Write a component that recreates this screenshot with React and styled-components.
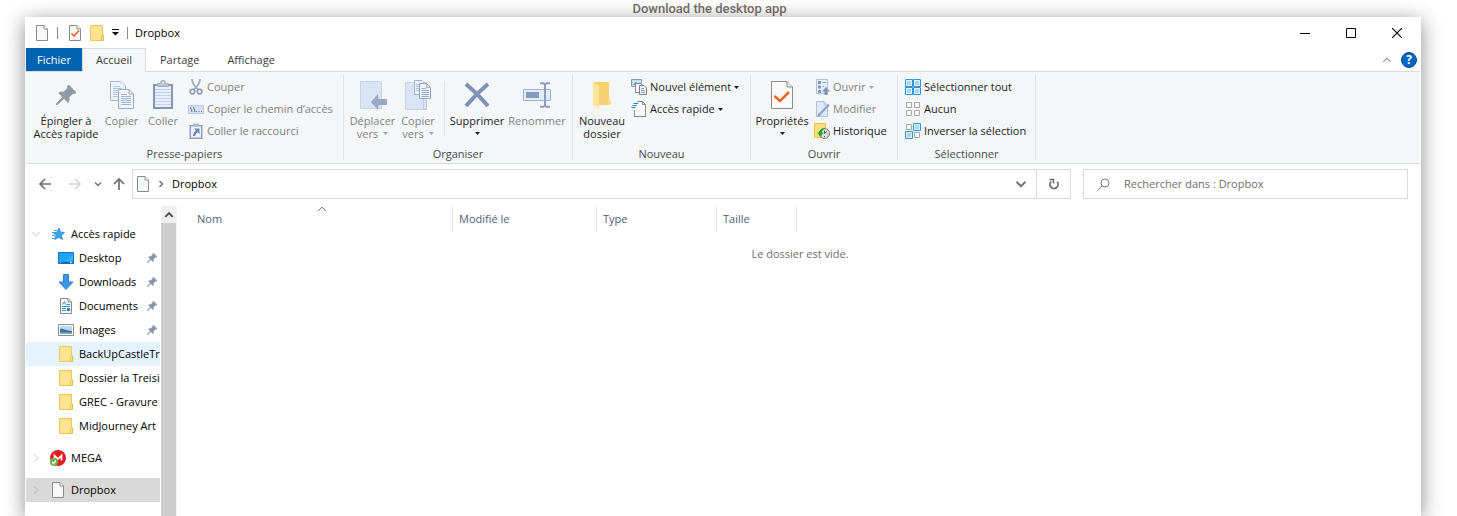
import React from 'react';
import styled, { createGlobalStyle } from 'styled-components';

const GlobalStyle = createGlobalStyle`
    * { box-sizing:border-box; }
    body {
        margin:0; overflow:hidden; background:#fff;
        font-family:"Open Sans", "Noto Sans", sans-serif; font-size:11px; color:#000;
    }
    button, input {
        font-family:inherit; font-size:inherit; color:inherit;
        margin:0; padding:0; border:0; background:none;
    }
    svg { display:block; flex-shrink:0; }
`

/* ---------- icons ---------- */

function Svg({ w = 16, h = 16, children }) {
    return <svg width={w} height={h} viewBox={`0 0 ${w} ${h}`} fill="none" aria-hidden="true">{children}</svg>
}

const FileIcon = () => (
    <Svg w={14}>
        <path d="M1.5 .5H9L12.5 4V15.5H1.5Z" fill="#f7f8f9" stroke="#8b8b8b"/>
        <path d="M9 .5V4H12.5" fill="#fff" stroke="#8b8b8b"/>
    </Svg>
)
const FileCheckIcon = () => (
    <Svg w={14}>
        <path d="M1.5 .5H9L12.5 4V15.5H1.5Z" fill="#f7f8f9" stroke="#8b8b8b"/>
        <path d="M9 .5V4H12.5" fill="#fff" stroke="#8b8b8b"/>
        <path d="M3.5 8.5L6 11L11 5.5" stroke="#f1621f" strokeWidth="1.7"/>
    </Svg>
)
const FolderIcon = () => (
    <Svg w={14}>
        <path d="M.5 .5H12.5V10H13.5V15.5H.5Z" fill="#ffe390" stroke="#ecc95a"/>
        <path d="M11.5 15.5V11.5L12.5 10H13.5V15.5Z" fill="#ffe9a6" stroke="#e6bd3e"/>
    </Svg>
)
const Caret = ({ color = '#1e1e1e' }) => (
    <Svg w={5} h={3}><path d="M0 0H5L2.5 3Z" fill={color}/></Svg>
)
const QuickMenuIcon = () => (
    <Svg w={7} h={7}><path d="M0 .5H7" stroke="#000"/><path d="M0 3H7L3.5 6.6Z" fill="#000"/></Svg>
)
const Chevron = ({ dir = 'down', size = 8, color = '#777', weight = 1.6 }) => {
    const d = {
        down: 'M1 2.5L4 5.5L7 2.5',
        up: 'M1 5.5L4 2.5L7 5.5',
        right: 'M2.5 1L5.5 4L2.5 7',
    }[dir]
    return (
        <svg width={size} height={size} viewBox="0 0 8 8" fill="none" aria-hidden="true">
            <path d={d} stroke={color} strokeWidth={weight * 8 / size}/>
        </svg>
    )
}
const ArrowIcon = ({ dir, color = '#6f6f6f' }) => {
    const d = {
        left: 'M13 7H2M7 2L2 7L7 12',
        right: 'M1 7H12M7 2L12 7L7 12',
        up: 'M7 13V2M2 7L7 2L12 7',
    }[dir]
    return <Svg w={14} h={14}><path d={d} stroke={color} strokeWidth="1.7"/></Svg>
}
const RefreshIcon = () => (
    <Svg w={12} h={12}>
        <path d="M3.2 3.4A4.1 4.1 0 1 0 9.2 3.8" stroke="#6b6b6b" strokeWidth="1.7"/>
        <path d="M1.5 1.5H5.5V5.5" stroke="#6b6b6b" strokeWidth="1.5"/>
    </Svg>
)
const SearchIcon = () => (
    <Svg w={13} h={13}>
        <circle cx="8" cy="5" r="4" stroke="#7d7d7d"/>
        <path d="M5.2 7.8L.5 12.5" stroke="#7d7d7d"/>
    </Svg>
)
const MinimizeIcon = () => <Svg w={10} h={10}><path d="M0 5.5H10" stroke="#000"/></Svg>
const MaximizeIcon = () => <Svg w={10} h={10}><path d="M.5 .5H9.5V9.5H.5Z" stroke="#000"/></Svg>
const CloseIcon = () => <Svg w={10} h={10}><path d="M0 0L10 10M10 0L0 10" stroke="#000" strokeWidth="1.1"/></Svg>

const PIN = 'M12.6 0L20 7.4L18.4 8.6L17 8.2L12.8 12.4C13.4 14.4 13 16 12 17.4L8 13.2L1.6 19.4L.2 20L.8 18.4L6.8 12L2.8 8C4.2 7 6 6.8 7.6 7.2L11.8 3L11.4 1.4Z'
const BigPinIcon = () => (
    <svg width="20" height="20" viewBox="0 0 20 20" aria-hidden="true"><path d={PIN} fill="#8f9aa3" stroke="#8f9aa3"/></svg>
)
const PinIcon = () => (
    <svg width="10" height="10" viewBox="0 0 20 20" aria-hidden="true"><path d={PIN} fill="#8796a3" stroke="#8796a3"/></svg>
)
const BigCopyIcon = () => (
    <Svg w={24} h={28}>
        <path d="M.5 .5H11L15.5 5V19.5H.5Z" fill="#eef3fb" stroke="#a9b8d2"/>
        <path d="M3 5.5H10M3 7.5H12M3 9.5H12M3 11.5H12M3 13.5H12M3 15.5H12" stroke="#b5c4dd"/>
        <path d="M8.5 8.5H19L23.5 13V27.5H8.5Z" fill="#f0f5fc" stroke="#99abca"/>
        <path d="M19 8.5V13H23.5" stroke="#99abca"/>
        <path d="M11 13.5H17M11 15.5H21M11 17.5H21M11 19.5H21M11 21.5H21M11 23.5H21" stroke="#a2b4d2"/>
    </Svg>
)
const BigPasteIcon = () => (
    <Svg w={20} h={30}>
        <path d="M0 4H20V29H0Z" fill="#8497bb"/>
        <path d="M2 6H18V27H2Z" fill="#e6effa"/>
        <path d="M2 9.5H18M2 12.5H18M2 15.5H18M2 18.5H18M2 21.5H18M2 24.5H18" stroke="#c3d2e8"/>
        <path d="M4.5 6.5V3.5H7.5C7.5 1 8.5 .5 10 .5S12.5 1 12.5 3.5H15.5V6.5Z" fill="#b9c2cf" stroke="#a4afc0"/>
        <circle cx="10" cy="3" r="1" fill="#f5f6f7"/>
    </Svg>
)
const CutIcon = () => (
    <Svg>
        <path d="M4 0C4 4 6 7 10.5 11M12 0C12 4 10 7 5.5 11" stroke="#a3acb8" strokeWidth="1.8"/>
        <circle cx="4.4" cy="12.6" r="2.3" stroke="#8b9cbd" strokeWidth="1.6"/>
        <circle cx="11.6" cy="12.6" r="2.3" stroke="#8b9cbd" strokeWidth="1.6"/>
    </Svg>
)
const CopyPathIcon = () => (
    <Svg>
        <path d="M.5 4.5H15.5V12.5H.5Z" fill="#d6e2f3" stroke="#bccbe2"/>
        <path d="M2.5 6L4 11M5.5 6L7 11" stroke="#5f7499"/>
        <path d="M8 10.5H9M10.5 10.5H11.5M13 10.5H14" stroke="#5f7499"/>
    </Svg>
)
const PasteLinkIcon = () => (
    <Svg>
        <path d="M1.5 2H14.5V16H1.5Z" fill="#8fa1c3"/>
        <path d="M3 3.5H13V14.5H3Z" fill="#ecf2fb"/>
        <path d="M5 .5H11V3H5Z" fill="#aeb9c9"/>
        <path d="M6 5.5H11.5V11L9.8 9.3C8.5 10 7.6 11 7.2 13H5C5.2 10.5 6.4 8.6 7.9 7.4Z" fill="#6f86ae"/>
    </Svg>
)
const MoveToIcon = () => (
    <Svg w={28} h={30}>
        <path d="M1.5 1.5H22.5V28.5H1.5Z" fill="#d9e4f4" stroke="#c5d4ea"/>
        <path d="M19.5 16V28.5H22.5V15" stroke="#c1d0e7"/>
        <path d="M12 22L19 14V19H28V25H19V30Z" fill="#98a9c8"/>
    </Svg>
)
const CopyToIcon = () => (
    <Svg w={28} h={30}>
        <path d="M1.5 2.5H22.5V29.5H1.5Z" fill="#d9e4f4" stroke="#c5d4ea"/>
        <path d="M19.5 19V29.5H22.5V19" stroke="#b6c8e3"/>
        <path d="M10.5 .5H18L21.5 4V14.5H10.5Z" fill="#eef3fb" stroke="#9fb0ce"/>
        <path d="M12 4.5H17M12 6.5H17M12 8.5H17M12 10.5H17" stroke="#b0bfda"/>
        <path d="M15.5 3.5H22.5L26.5 7.5V18.5H15.5Z" fill="#eef3fb" stroke="#8fa3c6"/>
        <path d="M22.5 3.5V7.5H26.5M17.5 8.5H22M17.5 10.5H25M17.5 12.5H25M17.5 14.5H25M17.5 16.5H25" stroke="#9aadcd"/>
    </Svg>
)
const DeleteIcon = () => (
    <Svg w={26} h={26}><path d="M2 2C8 7 19 18 24 24M24 2C18 7 7 18 2 24" stroke="#7f91b4" strokeWidth="4"/></Svg>
)
const RenameIcon = () => (
    <Svg w={28} h={28}>
        <path d="M.5 8.5H27.5V19.5H.5Z" fill="#e3edf9" stroke="#9fb1d0"/>
        <path d="M3 11H16V17H3Z" fill="#8599bf"/>
        <path d="M17 2.2H20.5L22 3.5L23.5 2.2H27M17 25.8H20.5L22 24.5L23.5 25.8H27M22 3V25" stroke="#8c9ec0" strokeWidth="2"/>
    </Svg>
)
const BigFolderIcon = () => (
    <Svg w={20} h={28}>
        <path d="M2 1H17V18L19 20V24H2Z" fill="#f5d26f"/>
        <path d="M17 18L19 20V24H15Z" fill="#ffe08a"/>
        <path d="M1 1L7 5V28L1 23.5Z" fill="#ffe59a"/>
    </Svg>
)
const NewItemIcon = () => (
    <Svg>
        <path d="M.5 .5H10.5V7.5H.5Z" fill="#c6e0f5" stroke="#8a9aa8"/>
        <path d="M2 6L5 3L9 6" fill="#3f8ec8"/>
        <path d="M4.5 4.5H10L12.5 7V13.5H4.5Z" fill="#f8f8f8" stroke="#8b8b8b"/>
        <path d="M8.5 6.5H13L15.5 9V15.5H8.5Z" fill="#fff" stroke="#7d7d7d"/>
        <path d="M10 9.5H13M10 11.5H14M10 13.5H14" stroke="#6ea4d0"/>
    </Svg>
)
const EasyAccessIcon = () => (
    <Svg>
        <path d="M3.5 .5H11.5L14.5 3.5V15.5H3.5Z" fill="#fdfdfd"/>
        <path d="M6 .5H11.5L14.5 3.5V15.5H3.5V9M11.5 .5V3.5H14.5" stroke="#8b8b8b"/>
        <path d="M2.5 2.5H7M1.5 4.5H6M.5 6.5H4.5" stroke="#1f7fcb" strokeWidth="1.1"/>
    </Svg>
)
const BigPropertiesIcon = () => (
    <Svg w={22} h={28}>
        <path d="M.5 .5H16L21.5 6V27.5H.5Z" fill="#fafafa" stroke="#8e8e8e"/>
        <path d="M16 .5V6H21.5" fill="#e9e9e9" stroke="#8e8e8e"/>
        <path d="M3.5 15L9 20L18 11" stroke="#f1621f" strokeWidth="2.6"/>
    </Svg>
)
const OpenIcon = () => (
    <Svg>
        <path d="M2.5 .5H13.5V14.5H2.5Z" fill="#e6eefa" stroke="#b3c2dc"/>
        <path d="M4 2H7V5H4ZM4 6.5H7V9.5H4ZM4 11H7V14H4Z" fill="#8499c0"/>
        <path d="M8.5 3.5H12M8.5 7.5H10" stroke="#8499c0"/>
        <path d="M12 8L16 12.5H13.5V16H10.5V12.5H8Z" fill="#7f94ba"/>
    </Svg>
)
const EditIcon = () => (
    <Svg>
        <path d="M2.5 .5H10L13.5 4V15.5H2.5Z" fill="#dfe9f7" stroke="#b3c2dc"/>
        <path d="M10 .5V4H13.5" stroke="#b3c2dc"/>
        <path d="M5.5 13.5L15 3.5" stroke="#93a6c9" strokeWidth="2.4"/>
        <path d="M3.5 15.5L4.5 12.5L6.5 14.5Z" fill="#7387ab"/>
    </Svg>
)
const HistoryIcon = () => (
    <Svg>
        <path d="M.5 .5H11.5V14.5H.5Z" fill="#ffe07a" stroke="#e8c146"/>
        <circle cx="10.5" cy="10.5" r="5" fill="#ddd" stroke="#7c7c7c"/>
        <path d="M10.5 7.5V10.5L13 8.5M10.5 13V14M13.5 11H14" stroke="#555"/>
        <path d="M12 5.4C8 4.6 5.4 6.6 5 9.6H3L6.4 14L9.6 9.6H7.8C8 7.4 9.6 6 12 5.4Z" fill="#28a428"/>
    </Svg>
)
const Tile = ({ x, y, on }) => on
    ? (
        <>
            <path d={`M${x + .5} ${y + .5}h7v7h-7z`} fill="#e3f4ff" stroke="#3093e0"/>
            <path d={`M${x + 2} ${y + 2}h4v4h-4z`} fill="#a6d8fa"/>
        </>
    )
    : <path d={`M${x + 1.5} ${y + 1.5}h5v5h-5z`} fill="#fff" stroke="#a6a6a6"/>
const TilesIcon = ({ pattern }) => (
    <Svg>
        {pattern.map((on, i) => <Tile key={i} x={(i % 2) * 8} y={i < 2 ? 0 : 8} on={on}/>)}
    </Svg>
)
const StarIcon = () => (
    <Svg>
        <path d="M9 2L10.5 6.2L14.5 6.4L11.4 9.2L12.6 13.5L8.6 11.2L4.8 13.5L6 9.3L3.4 6.6L7.4 6.2Z" fill="#35a8ee" stroke="#1c86d1" strokeWidth=".8"/>
        <path d="M4 4.5H7M2 6.5H4.5M2 9.5H5M2 12.5H4.5" stroke="#3b9be2"/>
    </Svg>
)
const DesktopIcon = () => (
    <Svg>
        <path d="M.5 2.5H15.5V13.5H.5Z" fill="#20a2f7" stroke="#0d76c6"/>
        <path d="M7 11L15 4V11Z" fill="#38b1ff"/>
        <path d="M1 12.5H15" stroke="#0b5f9f"/>
        <path d="M2 12.5H3M12 12.5H14" stroke="#fff"/>
    </Svg>
)
const DownloadIcon = () => (
    <Svg><path d="M5.5 .5H10.5V8H15L8 15.5L1 8H5.5Z" fill="#3a97e6" stroke="#2d80cc"/></Svg>
)
const DocumentIcon = () => (
    <Svg>
        <path d="M2.5 .5H10L13.5 4V15.5H2.5Z" fill="#fbfbfb" stroke="#868686"/>
        <path d="M10 .5V4H13.5" stroke="#868686"/>
        <path d="M4.5 6.5L6.5 3.5L7.5 6.5M8.5 6.5H12M4 8.5H12M4 10.5H8M4 12.5H8" stroke="#2f8fd0"/>
        <path d="M9 10H12V13H9Z" fill="#3c7ea6"/>
    </Svg>
)
const PictureIcon = () => (
    <Svg>
        <path d="M.5 2.5H15.5V13.5H.5Z" fill="#fff" stroke="#8d8d8d"/>
        <path d="M2 4H14V12H2Z" fill="#b6d9f4"/>
        <path d="M2 7C5 6 8 9 14 9V12H2Z" fill="#41719a"/>
        <path d="M2 10.5H14V12H2Z" fill="#7fb0d0"/>
    </Svg>
)
const MegaIcon = () => (
    <Svg>
        <circle cx="8" cy="8" r="8" fill="#e31b23"/>
        <path d="M4.5 10.5V5.5L8 9L11.5 5.5V10.5" stroke="#fff" strokeWidth="1.7"/>
        <circle cx="4" cy="12" r="4" fill="#6cb33f"/>
        <path d="M2 12L3.5 13.5L6 10.5" stroke="#fff" strokeWidth="1.2"/>
    </Svg>
)

/* ---------- ribbon ---------- */

function Big({ icon, lines, width, disabled, caret }) {
    const color = disabled ? '#a6a6a6' : '#1e1e1e'
    return (
        <BigButton $width={width} disabled={disabled}>
            <BigIcon>{icon}</BigIcon>
            <span>{lines[0]}</span>
            <SecondLine>
                {lines[1]}
                {caret && <Caret color={color}/>}
            </SecondLine>
        </BigButton>
    )
}

function Small({ icon, label, disabled, caret }) {
    return (
        <SmallButton disabled={disabled}>
            {icon}
            <SmallText>{label}</SmallText>
            {caret && <Caret color={disabled ? '#a6a6a6' : '#1e1e1e'}/>}
        </SmallButton>
    )
}

function Group({ label, width, pad, children }) {
    return (
        <GroupWrap $width={width}>
            <GroupBody $pad={pad}>{children}</GroupBody>
            <GroupLabel>{label}</GroupLabel>
        </GroupWrap>
    )
}

function Ribbon() {
    return (
        <RibbonWrap>
            <Group label="Presse-papiers" width={318} pad={5}>
                <Big icon={<BigPinIcon/>} lines={['Épingler à', 'Accès rapide']} width={70}/>
                <Big icon={<BigCopyIcon/>} lines={['Copier']} width={41} disabled/>
                <Big icon={<BigPasteIcon/>} lines={['Coller']} width={42} disabled/>
                <SmallColumn $pad={4}>
                    <Small icon={<CutIcon/>} label="Couper" disabled/>
                    <Small icon={<CopyPathIcon/>} label="Copier le chemin d’accès" disabled/>
                    <Small icon={<PasteLinkIcon/>} label="Coller le raccourci" disabled/>
                </SmallColumn>
            </Group>
            <Group label="Organiser" width={229} pad={4}>
                <Big icon={<MoveToIcon/>} lines={['Déplacer', 'vers']} width={49} disabled caret/>
                <Big icon={<CopyToIcon/>} lines={['Copier', 'vers']} width={42} disabled caret/>
                <Divider/>
                <Big icon={<DeleteIcon/>} lines={['Supprimer']} width={64} caret/>
                <Big icon={<RenameIcon/>} lines={['Renommer']} width={56} disabled/>
            </Group>
            <Group label="Nouveau" width={178} pad={2}>
                <Big icon={<BigFolderIcon/>} lines={['Nouveau', 'dossier']} width={54}/>
                <SmallColumn $pad={2}>
                    <Small icon={<NewItemIcon/>} label="Nouvel élément" caret/>
                    <Small icon={<EasyAccessIcon/>} label="Accès rapide" caret/>
                </SmallColumn>
            </Group>
            <Group label="Ouvrir" width={147} pad={1}>
                <Big icon={<BigPropertiesIcon/>} lines={['Propriétés']} width={60} caret/>
                <SmallColumn $pad={2}>
                    <Small icon={<OpenIcon/>} label="Ouvrir" disabled caret/>
                    <Small icon={<EditIcon/>} label="Modifier" disabled/>
                    <Small icon={<HistoryIcon/>} label="Historique"/>
                </SmallColumn>
            </Group>
            <Group label="Sélectionner" width={138} pad={7}>
                <SmallColumn $pad={0}>
                    <Small icon={<TilesIcon pattern={[true, true, true, true]}/>} label="Sélectionner tout"/>
                    <Small icon={<TilesIcon pattern={[false, false, false, false]}/>} label="Aucun"/>
                    <Small icon={<TilesIcon pattern={[false, true, true, false]}/>} label="Inverser la sélection"/>
                </SmallColumn>
            </Group>
        </RibbonWrap>
    )
}

/* ---------- sidebar ---------- */

const quickAccess = [
    { name: 'Desktop', icon: <DesktopIcon/>, pinned: true },
    { name: 'Downloads', icon: <DownloadIcon/>, pinned: true },
    { name: 'Documents', icon: <DocumentIcon/>, pinned: true },
    { name: 'Images', icon: <PictureIcon/>, pinned: true },
    { name: 'BackUpCastleTr', icon: <FolderIcon/>, hovered: true },
    { name: 'Dossier la Treisie', icon: <FolderIcon/> },
    { name: 'GREC - Gravure', icon: <FolderIcon/> },
    { name: 'MidJourney Art', icon: <FolderIcon/> },
]

function TreeItem({ name, icon, chevron, pinned, hovered, selected, nested, spaced }) {
    return (
        <TreeRow $hovered={hovered} $selected={selected} $spaced={spaced}>
            <TreeChevron $nested={nested}>
                {chevron && <Chevron dir={chevron} size={10} color={selected ? '#c6c6c6' : '#e2e2e2'}/>}
            </TreeChevron>
            <TreeIcon>{icon}</TreeIcon>
            <TreeName>{name}</TreeName>
            {pinned && <PinSlot><PinIcon/></PinSlot>}
        </TreeRow>
    )
}

function Sidebar() {
    return (
        <SidebarWrap>
            <Tree>
                <TreeItem name="Accès rapide" icon={<StarIcon/>} chevron="down"/>
                {quickAccess.map(item => <TreeItem key={item.name} nested {...item}/>)}
                <TreeItem name="MEGA" icon={<MegaIcon/>} chevron="right" spaced/>
                <TreeItem name="Dropbox" icon={<FileIcon/>} chevron="right" selected spaced/>
            </Tree>
            <ScrollBar>
                <ScrollButton aria-label="Défiler vers le haut"><Chevron dir="up" size={10} color="#505050" weight={2}/></ScrollButton>
                <ScrollThumb/>
            </ScrollBar>
        </SidebarWrap>
    )
}

/* ---------- window ---------- */

function App() {
    return (
        <Page>
            <GlobalStyle/>
            <PageLink href="#">Download the desktop app</PageLink>
            <Window>
                <TitleBar>
                    <QuickTools>
                        <FileIcon/>
                        <TitleSep/>
                        <IconButton aria-label="Propriétés"><FileCheckIcon/></IconButton>
                        <IconButton aria-label="Nouveau dossier"><FolderIcon/></IconButton>
                        <IconButton aria-label="Personnaliser"><QuickMenuIcon/></IconButton>
                        <TitleSep/>
                    </QuickTools>
                    <Title>Dropbox</Title>
                    <WindowButton aria-label="Réduire"><MinimizeIcon/></WindowButton>
                    <WindowButton aria-label="Agrandir"><MaximizeIcon/></WindowButton>
                    <WindowButton aria-label="Fermer"><CloseIcon/></WindowButton>
                </TitleBar>
                <Tabs>
                    <FileTab>Fichier</FileTab>
                    <Tab $active>Accueil</Tab>
                    <Tab>Partage</Tab>
                    <Tab>Affichage</Tab>
                    <TabTools>
                        <IconButton aria-label="Réduire le ruban"><Chevron dir="up" size={10} color="#9a9a9a" weight={1.2}/></IconButton>
                        <IconButton aria-label="Aide"><HelpCircle>?</HelpCircle></IconButton>
                    </TabTools>
                </Tabs>
                <Ribbon/>
                <NavBar>
                    <NavButton $width={30} aria-label="Précédent"><ArrowIcon dir="left"/></NavButton>
                    <NavButton $width={30} aria-label="Suivant" disabled><ArrowIcon dir="right" color="#d4d4d4"/></NavButton>
                    <NavButton $width={16} aria-label="Emplacements récents"><Chevron weight={1.5}/></NavButton>
                    <NavButton $width={26} aria-label="Dossier parent"><ArrowIcon dir="up"/></NavButton>
                    <AddressBox>
                        <FileIcon/>
                        <Chevron dir="right"/>
                        <Crumb>Dropbox</Crumb>
                        <NavButton $width={30} aria-label="Historique des adresses"><Chevron size={12} weight={2}/></NavButton>
                        <RefreshButton aria-label="Actualiser"><RefreshIcon/></RefreshButton>
                    </AddressBox>
                    <SearchBox>
                        <SearchIcon/>
                        <SearchInput type="text" aria-label="Rechercher dans : Dropbox" placeholder="Rechercher dans : Dropbox"/>
                    </SearchBox>
                </NavBar>
                <Content>
                    <Sidebar/>
                    <Main>
                        <FileTable>
                            <thead>
                                <tr>
                                    <Th $width={262}>Nom<SortMark><Chevron dir="up" size={10} color="#666" weight={1}/></SortMark></Th>
                                    <Th $width={144}>Modifié le</Th>
                                    <Th $width={120}>Type</Th>
                                    <Th $width={80}>Taille</Th>
                                    <th/>
                                </tr>
                            </thead>
                            <tbody>
                                <tr><EmptyCell colSpan={5}>Le dossier est vide.</EmptyCell></tr>
                            </tbody>
                        </FileTable>
                    </Main>
                </Content>
            </Window>
        </Page>
    )
}
export default App;

const Page = styled.div`
    display:flex; flex-direction:column;
    height:100vh;
`
const PageLink = styled.a`
    align-self:center;
    height:17px; line-height:17px; padding-right:38px;
    font-family:Roboto, sans-serif; font-size:13px; font-weight:500;
    color:#77716b; text-decoration:none;
`
const Window = styled.div`
    flex:1; min-height:0;
    display:flex; flex-direction:column;
    margin:0 36px 0 25px; padding:0 1px;
    background:#fff;
    box-shadow:0 4px 20px rgba(0, 0, 0, 0.45);
`

const TitleBar = styled.header`
    display:flex; align-items:center;
    height:31px; padding-left:9px;
`
const QuickTools = styled.div`
    display:flex; align-items:center; gap:8px;
`
const TitleSep = styled.span`
    width:1px; height:12px; margin-right:2px;
    background:#8a8a8a;
`
const IconButton = styled.button`
    display:flex; align-items:center; justify-content:center;
`
const Title = styled.h1`
    flex:1;
    margin:0; padding-left:5px;
    font-size:11px; font-weight:400;
`
const WindowButton = styled.button`
    display:flex; align-items:center; justify-content:center;
    width:46px; height:31px;
`

const Tabs = styled.nav`
    display:flex;
    height:24px;
    border-bottom:1px solid #dadbdc;
`
const Tab = styled.button`
    height:24px; padding:0 13px 2px;
    color:#3b3b3b;
    border:1px solid ${p => p.$active ? '#dadbdc' : 'transparent'};
    border-bottom:0;
    background:${p => p.$active ? '#f5f6f7' : 'none'};
`
const FileTab = styled.button`
    height:23px; width:56px;
    color:#fff; background:#0063b1;
`
const TabTools = styled.div`
    display:flex; align-items:center; gap:9px;
    margin-left:auto; padding-right:3px;
`
const HelpCircle = styled.span`
    width:16px; height:16px; line-height:14px;
    border:1px solid #0b4f8a; border-radius:50%;
    background:#0067c5; color:#fff;
    font-size:12px; font-weight:700; text-align:center;
`

const RibbonWrap = styled.div`
    display:flex;
    height:92px;
    background:#f5f6f7;
    border-bottom:1px solid #dadbdc;
`
const GroupWrap = styled.section`
    display:flex; flex-direction:column;
    width:${p => p.$width}px; flex-shrink:0;
    margin:2px 0 3px;
    border-right:1px solid #e2e3e4;
`
const GroupBody = styled.div`
    flex:1;
    display:flex; align-items:flex-start;
    padding-left:${p => p.$pad}px;
`
const GroupLabel = styled.div`
    line-height:12px;
    text-align:center; color:#4c4c4c;
`
const BigButton = styled.button`
    display:flex; flex-direction:column; align-items:center;
    width:${p => p.$width}px; padding-top:5px;
    line-height:13px; white-space:nowrap;
    color:${p => p.disabled ? '#838383' : '#1e1e1e'};
`
const BigIcon = styled.span`
    display:flex; align-items:center; justify-content:center;
    height:32px; margin-bottom:3px;
`
const SecondLine = styled.span`
    display:flex; align-items:center; gap:5px;
    min-height:13px;
`
const SmallColumn = styled.div`
    display:flex; flex-direction:column;
    padding:2px 0 0 ${p => p.$pad}px;
`
const SmallButton = styled.button`
    display:flex; align-items:center; gap:3px;
    height:22px;
    white-space:nowrap;
    color:${p => p.disabled ? '#838383' : '#1e1e1e'};
`
const SmallText = styled.span`
    padding-bottom:2px;
`
const Divider = styled.span`
    width:1px; height:55px;
    margin:7px 0 0 5px;
    background:#e2e3e4;
`

const NavBar = styled.div`
    display:flex; align-items:center;
    padding:5px 12px 7px 4px;
`
const NavButton = styled.button`
    display:flex; align-items:center; justify-content:center;
    width:${p => p.$width}px; height:28px;
`
const AddressBox = styled.div`
    flex:1;
    display:flex; align-items:center; gap:7px;
    height:30px; padding-left:3px;
    border:1px solid #d9d9d9;
`
const Crumb = styled.button`
    margin-right:auto; padding-bottom:2px;
`
const RefreshButton = styled.button`
    display:flex; align-items:center; justify-content:center;
    width:34px; height:28px; margin-left:-7px;
    border-left:1px solid #d9d9d9;
`
const SearchBox = styled.label`
    display:flex; align-items:center; gap:14px;
    width:325px; height:30px; margin-left:12px; padding-left:13px;
    border:1px solid #d9d9d9;
`
const SearchInput = styled.input`
    flex:1; min-width:0; height:28px; padding-bottom:2px;
    outline:0;
    &::placeholder { color:#6d6d6d; opacity:1; }
`

const Content = styled.div`
    flex:1; min-height:0;
    display:flex;
`
const SidebarWrap = styled.aside`
    display:flex;
    width:154px; flex-shrink:0;
    border-right:1px solid #f3f3f3;
`
const Tree = styled.ul`
    width:134px;
    margin:0; padding:16px 0 0;
    list-style:none;
`
const TreeRow = styled.li`
    display:flex; align-items:center;
    height:24px; margin-top:${p => p.$spaced ? 8 : 0}px;
    background:${p => p.$selected ? '#d9d9d9' : p.$hovered ? '#e5f3ff' : 'none'};
`
const TreeChevron = styled.span`
    flex-shrink:0;
    width:${p => p.$nested ? 32 : 24}px; padding-left:5px;
`
const TreeIcon = styled.span`
    display:flex; justify-content:center; flex-shrink:0;
    width:16px; margin-right:5px;
`
const TreeName = styled.span`
    flex:1; overflow:hidden;
    padding-bottom:1px; white-space:nowrap;
`
const PinSlot = styled.span`
    padding:0 3px 0 2px;
`
const ScrollBar = styled.div`
    display:flex; flex-direction:column;
    width:16px; margin-left:1px;
    background:#f0f0f0;
`
const ScrollButton = styled.button`
    display:flex; align-items:center; justify-content:center;
    height:17px;
`
const ScrollThumb = styled.span`
    flex:1; margin-right:1px;
    background:#cdcdcd;
`

const Main = styled.main`
    flex:1; min-width:0;
    padding:0 11px;
`
const FileTable = styled.table`
    width:100%; table-layout:fixed;
    border-collapse:separate; border-spacing:0;
`
const Th = styled.th`
    position:relative;
    width:${p => p.$width}px; height:26px; padding:0 0 2px 6px;
    font-weight:400; text-align:left;
    color:#4c607a;
    border-right:1px solid #e5e5e5;
`
const SortMark = styled.span`
    position:absolute; top:-2px; left:50%;
    transform:translateX(-50%);
`
const EmptyCell = styled.td`
    padding:14px 0 0;
    line-height:16px; text-align:center;
    color:#6d6d6d;
`
